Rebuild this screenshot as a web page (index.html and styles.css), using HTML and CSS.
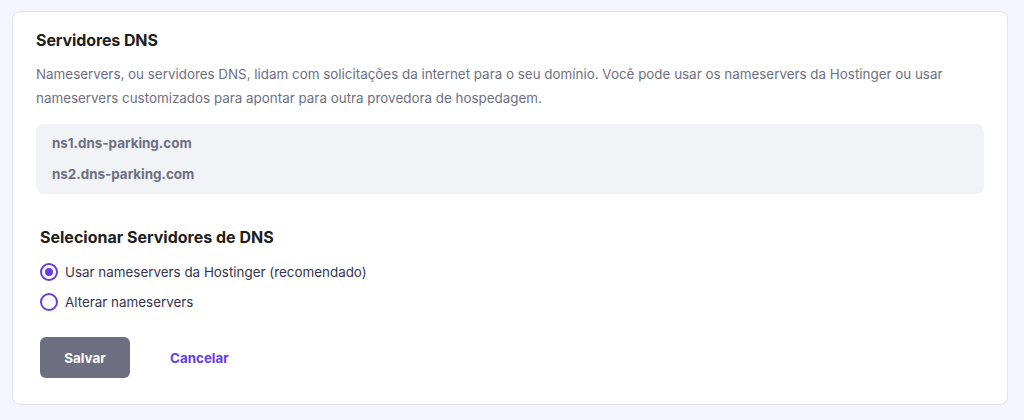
FILE: index.html
```html
<!DOCTYPE html>
<html lang="pt">
<head>
<meta charset="utf-8">
<link rel="stylesheet" href="styles.css">
</head>
<body>
<div class="card">
  <h2 class="title">Servidores DNS</h2>
  <p class="desc">Nameservers, ou servidores DNS, lidam com solicitações da internet para o seu domínio. Você pode usar os nameservers da Hostinger ou usar nameservers customizados para apontar para outra provedora de hospedagem.</p>
  <div class="ns-box">
    <div class="ns">ns1.dns-parking.com</div>
    <div class="ns">ns2.dns-parking.com</div>
  </div>
  <div class="select">
    <h3 class="subtitle">Selecionar Servidores de DNS</h3>
    <label class="radio"><span class="dot checked"></span><span>Usar nameservers da Hostinger (recomendado)</span></label>
    <label class="radio"><span class="dot"></span><span>Alterar nameservers</span></label>
    <div class="actions">
      <button class="btn-save">Salvar</button>
      <button class="btn-cancel">Cancelar</button>
    </div>
  </div>
</div>
</body>
</html>
```
FILE: styles.css
```css
html, body { margin: 0; padding: 0; }
body {
  background: #f4f5ff;
  font-family: "Inter", "DejaVu Sans", sans-serif;
  padding: 11px 16px 15px 12px;
  height: 420px;
  box-sizing: border-box;
}
.card {
  background: #fff;
  border: 1px solid #e3e4ea;
  border-radius: 8px;
  padding: 16px 23px 25px 23px;
  height: 100%;
  box-sizing: border-box;
}
.title {
  margin: 0;
  font-size: 16px;
  font-weight: 700;
  color: #1d1e20;
  line-height: 24px;
  letter-spacing: -0.1px;
}
.desc {
  margin: 10px 0 0 0;
  font-size: 13.4px;
  line-height: 24px;
  color: #6d7081;
}
.ns-box {
  margin-top: 14px;
  background: #f2f3f6;
  border-radius: 8px;
  padding: 4px 16px 4px 16px;
}
.ns {
  font-size: 13.4px;
  font-weight: 700;
  color: #6d7081;
  line-height: 31px;
}
.select { padding-left: 4px; margin-top: 31px; }
.subtitle {
  margin: 0;
  font-size: 16px;
  font-weight: 700;
  color: #1d1e20;
  line-height: 24px;
}
.radio {
  display: flex;
  align-items: center;
  gap: 7px;
  font-size: 13.4px;
  color: #36344d;
  height: 30px;
}
.radio:first-of-type { margin-top: 8px; }
.dot {
  width: 18px;
  height: 18px;
  border: 2px solid #673de6;
  border-radius: 50%;
  box-sizing: border-box;
  display: flex;
  align-items: center;
  justify-content: center;
}
.dot.checked::after {
  content: "";
  width: 8px;
  height: 8px;
  border-radius: 50%;
  background: #673de6;
}
.actions {
  display: flex;
  align-items: center;
  gap: 24px;
  margin-top: 20px;
}
.btn-save {
  width: 90px;
  height: 41px;
  border: none;
  border-radius: 6px;
  background: #6d6e80;
  color: #fff;
  font-family: inherit;
  font-size: 13.4px;
  font-weight: 700;
}
.btn-cancel {
  background: none;
  border: none;
  padding: 0 16px;
  color: #673de6;
  font-family: inherit;
  font-size: 13.4px;
  font-weight: 700;
}
```
